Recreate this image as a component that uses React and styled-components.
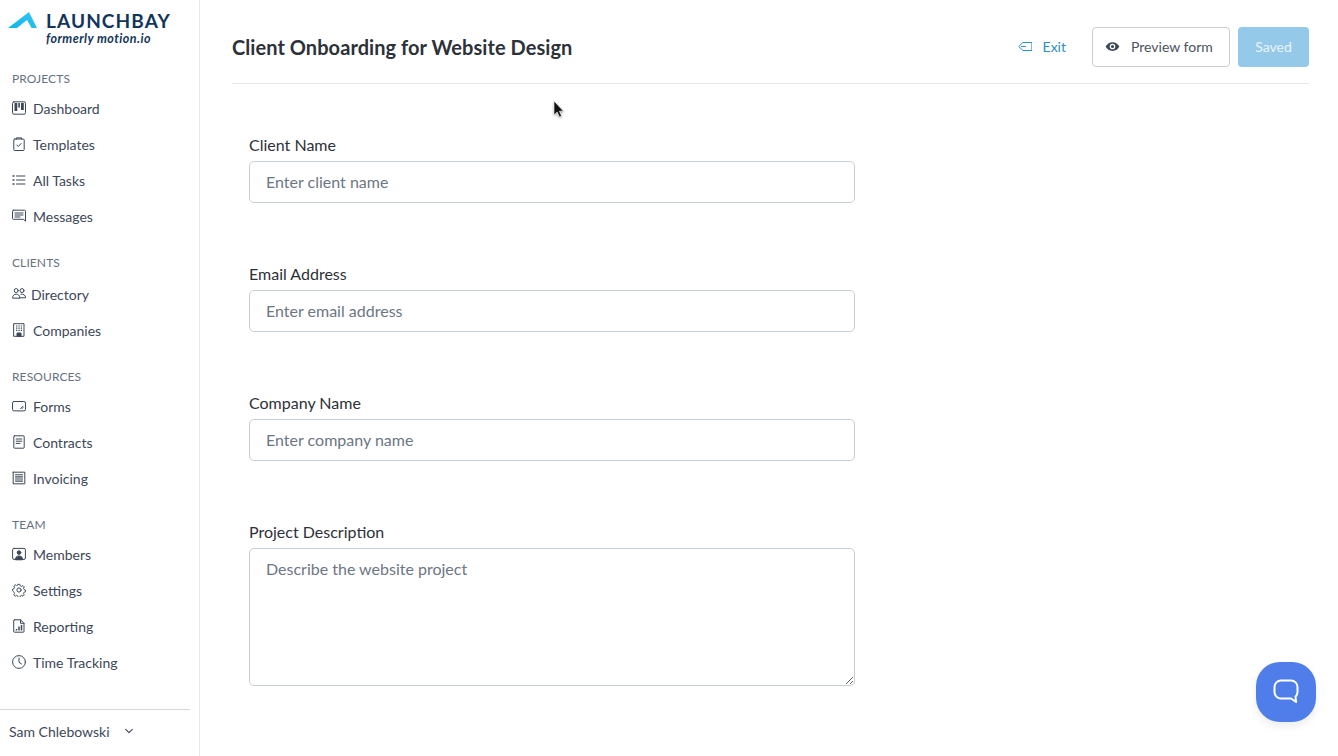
import React from "react";
import styled, { createGlobalStyle } from "styled-components";

const Global = createGlobalStyle`
  html, body { margin: 0; padding: 0; height: 756px; overflow: hidden; background: #fff; }
  body { font-family: Lato, "Open Sans", sans-serif; }
  * { box-sizing: border-box; }
`;
const Page = styled.div`display: flex; height: 756px; position: relative; overflow: hidden;`;
const Sidebar = styled.aside`
  width: 200px; flex: none; border-right: 1px solid #e7e9ed; display: flex; flex-direction: column;
`;
const Brand = styled.div`height: 60px; padding: 10px 0 0 8px; display: flex; gap: 9px; align-items: flex-start;`;
const BrandText = styled.div`display: flex; flex-direction: column; color: #12365a;`;
const BrandName = styled.span`font-size: 19px; line-height: 22px; font-weight: 700; letter-spacing: 1.1px;`;
const BrandSub = styled.span`font-size: 12.5px; line-height: 13px; font-weight: 700; font-style: italic; letter-spacing: .45px;`;
const Nav = styled.nav`flex: 1; padding-top: 10px;`;
const Group = styled.div`margin-bottom: 20px;`;
const GroupLabel = styled.div`
  font-size: 12px; line-height: 18px; padding-left: 12px; color: #667182; text-transform: uppercase;
  margin-bottom: ${p => p.$extra ? 4 : 2}px; letter-spacing: .1px;
`;
const Item = styled.a`
  height: 36px; display: flex; align-items: center; padding-left: 12px; gap: ${p => p.$gap ?? 7}px;
  font-size: 14px; color: #3c4859;
  svg { flex: none; }
`;
const Footer = styled.div`
  width: 190px; height: 47px; border-top: 1px solid #d3d6db; display: flex; align-items: center;
  padding: 0 0 4px 9px; font-size: 14px; color: #3c4859; gap: 14px;
`;
const Main = styled.main`flex: 1; padding: 0 29px 0 32px;`;
const Header = styled.header`
  height: 84px; border-bottom: 1px solid #e3e6ea; display: flex; align-items: center;
  justify-content: space-between; padding: 22px 0 11px;
`;
const Title = styled.h1`margin: 0; font-size: 20px; font-weight: 700; color: #2d3138; letter-spacing: .06px;`;
const Actions = styled.div`display: flex; align-items: center;`;
const ExitLink = styled.a`
  display: flex; align-items: center; gap: 11px; font-size: 14px; line-height: 18px; padding-bottom: 1px; color: #2d8fc4; margin-right: 26px;
`;
const PreviewButton = styled.button`
  width: 138px; height: 40px; background: #fff; border: 1px solid #c9ced5; border-radius: 4px;
  display: flex; align-items: center; gap: 11px; padding: 0 0 2px 12px;
  font: 14px Lato, sans-serif; color: #4a5361; margin-right: 8px;
`;
const SavedButton = styled.button`
  width: 71px; height: 40px; background: #95c9ea; border: 0; border-radius: 4px;
  font: 14px Lato, sans-serif; color: #eaf4fb; padding: 0 0 2px;
`;
const Form = styled.form`width: 606px; margin-left: 17px; padding-top: 49px;`;
const Field = styled.div`margin-bottom: 59px;`;
const Label = styled.label`display: block; font-size: 16px; line-height: 24px; margin-bottom: 4px; color: #2d3138;`;
const controlCss = `
  display: block; width: 100%; border: 1px solid #c6ced8; border-radius: 5px; background: #fff;
  font: 16px Lato, sans-serif; color: #2d3138; padding: 0 16px; outline: none;
  &::placeholder { color: #6c7685; opacity: 1; }
`;
const Input = styled.input`${controlCss} height: 42px; padding-bottom: 2px;`;
const TextArea = styled.textarea`${controlCss} height: 138px; padding-top: 10px; line-height: 20px; resize: vertical;`;
const Launcher = styled.button`
  position: absolute; left: 1256px; top: 662px; width: 60px; height: 60px; border: 0; padding: 0;
  border-radius: 24px; background: #4f7eea; display: flex; align-items: center; justify-content: center;
  box-shadow: 0 4px 8px rgba(0,0,0,.08);
`;
const Cursor = styled.svg`position: absolute; left: 553px; top: 100px; filter: drop-shadow(0 1px 1px rgba(0,0,0,.35));`;

const Ico = ({ children, w = 14, h = 14, c = "#3c4859" }) => (
  <svg width={w} height={h} viewBox="0 0 14 14" fill="none" stroke={c} strokeWidth="1" strokeLinecap="round" strokeLinejoin="round">{children}</svg>
);
const icons = {
  board: <Ico><rect x=".5" y=".8" width="13" height="12.4" rx="1.5" /><path d="M2.500 2v8h2.800V2zM6.300 2v4.500h1.600V2zM9 2v7h2.800V2z" fill="#3c4859" stroke="none" /></Ico>,
  clip: <Ico><rect x="1.800" y="2" width="10.400" height="11.500" rx="1" /><path d="M4.500 2V.9h5V2M4.800 8l1.500 1.500 2.800-3" /></Ico>,
  list: <Ico><path d="M4.500 3h8.500M4.500 7h8.500M4.500 11h8.500" /><path d="M1 3h1M1 7h1M1 11h1" strokeWidth="1.400" /></Ico>,
  msg: <Ico><path d="M1.500 1.200h11a1 1 0 0 1 1 1v9.900l-2.200-1.800H1.500a1 1 0 0 1-1-1V2.200a1 1 0 0 1 1-1z" /><path d="M3 4h8M3 6h8M3 8h5" /></Ico>,
  people: <Ico><circle cx="4.200" cy="3.600" r="2" /><circle cx="10" cy="3.600" r="2" /><path d="M.6 10.800c0-2.400 1.600-3.600 3.600-3.600s3.600 1.200 3.600 3.600zM9 7.200c2.600-.4 4.600 1 4.600 3.600H8" /></Ico>,
  building: <Ico><rect x="2" y=".7" width="10" height="12.600" /><path d="M4 3h1.300M6.400 3h1.300M8.800 3H10M4 5.200h1.300M6.400 5.200h1.300M8.800 5.200H10M4 7.400h1.300M6.400 7.400h1.300M8.800 7.400H10" strokeWidth="1.200" strokeLinecap="butt" /><path d="M5 13.300V10h4v3.300z" fill="#3c4859" /></Ico>,
  form: <Ico><rect x=".5" y="2.500" width="13" height="9.400" rx="1.600" /><path d="M8.600 9.600l2.400-2.400M10 9.600l1-1" /></Ico>,
  doc: <Ico><path d="M2.600.8h8.800a.8.8 0 0 1 .8.8v10.800a.8.8 0 0 1-.8.8H2.600a.8.8 0 0 1-.8-.8V1.600a.8.8 0 0 1 .8-.8z" /><path d="M4.200 4h5.600M4.200 6.200h5.600M4.200 8.400h3.800" /></Ico>,
  invoice: <Ico><rect x="1.200" y="1.200" width="11.600" height="11.600" strokeDasharray="1 .6" /><path d="M3.500 3.800h7M3.500 5.900h7M3.500 8h7M3.500 10.100h7" strokeWidth="1.100" /></Ico>,
  member: <Ico><rect x=".6" y="1.400" width="12.800" height="11" rx="1.400" /><circle cx="7" cy="5.600" r="1.800" fill="#3c4859" /><path d="M3.500 12.400c0-2.400 1.500-3.400 3.500-3.400s3.500 1 3.500 3.400z" fill="#3c4859" /></Ico>,
  gear: <Ico><circle cx="7" cy="7" r="2.100" /><path d="M6 .8h2l.4 1.700 1.400.6 1.500-.9 1.400 1.400-.9 1.500.6 1.400 1.600.5v2l-1.600.4-.6 1.400.9 1.500-1.400 1.400-1.500-.9-1.400.6-.4 1.600H6l-.4-1.600-1.400-.6-1.500.9-1.400-1.400.9-1.500-.6-1.400L0 8V6l1.600-.5.6-1.400-.9-1.500 1.400-1.400 1.500.9 1.400-.6z" transform="translate(.6 .6) scale(.92)" /></Ico>,
  report: <Ico><path d="M2.500.8h6l3.500 3.500v8.100a.8.8 0 0 1-.8.8H2.500a.8.8 0 0 1-.8-.8V1.600a.8.8 0 0 1 .8-.8zM8.500.8v3.500H12" /><path d="M4.500 11.500v-1.500M7 11.500V7.500M9.500 11.500V6" strokeWidth="1.500" strokeLinecap="butt" /></Ico>,
  clock: <Ico><circle cx="7" cy="7" r="6.400" /><path d="M7 3v4.300l2.600 1.700" /></Ico>,
};
const groups = [
  ["Projects", [["board", "Dashboard"], ["clip", "Templates"], ["list", "All Tasks"], ["msg", "Messages"]]],
  ["Clients", [["people", "Directory", 5], ["building", "Companies"]], true],
  ["Resources", [["form", "Forms"], ["doc", "Contracts"], ["invoice", "Invoicing"]]],
  ["Team", [["member", "Members"], ["gear", "Settings"], ["report", "Reporting"], ["clock", "Time Tracking"]]],
];
const fields = [
  ["Client Name", "Enter client name"],
  ["Email Address", "Enter email address"],
  ["Company Name", "Enter company name"],
];

export default function App() {
  return (
    <Page>
      <Global />
      <Sidebar>
        <Brand>
          <svg width="29" height="18" viewBox="0 0 29 18" style={{ flex: "none", marginTop: 2 }}>
            <defs><linearGradient id="lb" x1="0" x2="1" y1="1" y2="0"><stop offset="0" stopColor="#12b5ea" /><stop offset="1" stopColor="#35c5f2" /></linearGradient></defs>
            <polygon points="0,16 21,0 29,16 23.500,16 19,8 9,16" fill="url(#lb)" />
          </svg>
          <BrandText>
            <BrandName>LAUNCHBAY</BrandName>
            <BrandSub>formerly motion.io</BrandSub>
          </BrandText>
        </Brand>
        <Nav>
          {groups.map(([label, items, extra]) => (
            <Group key={label}>
              <GroupLabel $extra={extra}>{label}</GroupLabel>
              {items.map(([icon, text, gap]) => (
                <Item key={text} $gap={gap}>{icons[icon]}{text}</Item>
              ))}
            </Group>
          ))}
        </Nav>
        <Footer>
          Sam Chlebowski
          <svg width="10" height="10" viewBox="0 0 12 12" fill="none" stroke="#3c4859" strokeWidth="1.300" strokeLinecap="round" strokeLinejoin="round"><path d="M2 4l4 4 4-4" /></svg>
        </Footer>
      </Sidebar>
      <Main>
        <Header>
          <Title>Client Onboarding for Website Design</Title>
          <Actions>
            <ExitLink>
              <svg width="14" height="12" viewBox="0 0 14 12" fill="none" stroke="#2d8fc4" strokeWidth="1" strokeLinejoin="round" strokeLinecap="round"><path d="M13.500 1.500H5L.7 5.500 5 9.500h8.500zM3.500 5.500h4" /></svg>
              Exit
            </ExitLink>
            <PreviewButton>
              <svg width="15" height="15" viewBox="0 0 24 24"><path d="M12 5C7 5 3 8 1 12c2 4 6 7 11 7s9-3 11-7c-2-4-6-7-11-7zm0 11.500a4.500 4.500 0 1 1 0-9 4.500 4.500 0 0 1 0 9zm0-7a2.500 2.500 0 1 0 0 5 2.500 2.500 0 0 0 0-5z" fill="#3c4859" /></svg>
              Preview form
            </PreviewButton>
            <SavedButton>Saved</SavedButton>
          </Actions>
        </Header>
        <Form>
          {fields.map(([label, ph]) => (
            <Field key={label}>
              <Label>{label}</Label>
              <Input placeholder={ph} />
            </Field>
          ))}
          <Field>
            <Label>Project Description</Label>
            <TextArea placeholder="Describe the website project" />
          </Field>
        </Form>
      </Main>
      <Cursor width="11" height="19" viewBox="0 0 11 19"><path d="M1 1v14l3.200-3 2.200 5 2.200-1-2.200-4.800H10.500z" fill="#111" stroke="#fff" strokeWidth=".6" /></Cursor>
      <Launcher aria-label="Chat">
        <svg width="26" height="26" viewBox="0 0 26 26" fill="none" stroke="#fff" strokeWidth="2" strokeLinejoin="round"><path d="M8 1.500h10a6.500 6.500 0 0 1 6.500 6.500v5a6.500 6.500 0 0 1-2 4.700l.6 5.300-5-3.500H8A6.500 6.500 0 0 1 1.500 13V8A6.500 6.500 0 0 1 8 1.500z" /></svg>
      </Launcher>
    </Page>
  );
}
